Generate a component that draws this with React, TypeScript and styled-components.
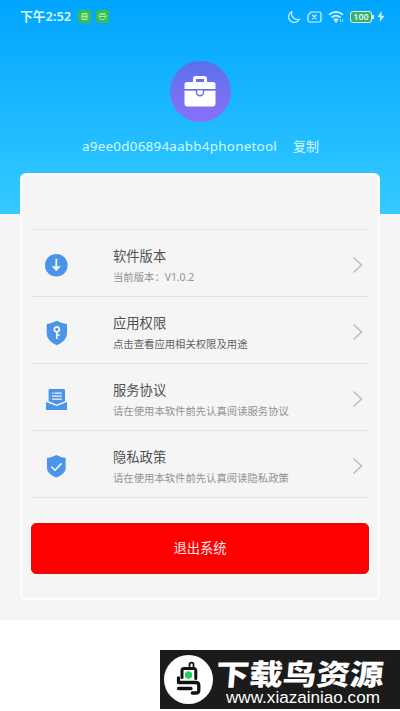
import React from "react";
import styled, { createGlobalStyle } from "styled-components";

const GlobalStyle = createGlobalStyle`
  * { box-sizing: border-box; }
  body {
    margin: 0;
    background: #fff;
    font-family: "Noto Sans", "Noto Sans CJK SC", sans-serif;
  }
`;

const Page = styled.div`
  width: 400px;
  height: 711px;
  display: flex;
  flex-direction: column;
  align-items: flex-end;
  overflow: hidden;
`;

const Screen = styled.main`
  width: 400px;
  height: 620px;
  flex: none;
  display: flex;
  flex-direction: column;
  background: linear-gradient(#00a5ff, #35caff) 0 0 / 100% 214px no-repeat #f5f5f5;
`;

const StatusBar = styled.header`
  height: 33px;
  padding: 0 15px 0 20px;
  display: flex;
  align-items: center;
  color: #d9f8ff;
`;

const Clock = styled.span`
  width: 58px;
  font-size: 12.8px;
  line-height: 33px;
  font-weight: 600;
  white-space: nowrap;
`;

const StatusIcons = styled.div`
  margin-left: auto;
  display: flex;
  align-items: center;
  gap: 6px;
`;

const AppBadges = styled.div`
  display: flex;
  gap: 5px;
`;

const Profile = styled.section`
  height: 140px;
  padding-top: 28px;
  display: flex;
  flex-direction: column;
  align-items: center;
`;

const Avatar = styled.div`
  width: 61px;
  height: 61px;
  border-radius: 50%;
  display: flex;
  align-items: center;
  justify-content: center;
  background: linear-gradient(#5b70ec, #8a70f8);
`;

const Identity = styled.div`
  width: 400px;
  margin-top: 14px;
  padding-left: 82px;
  display: flex;
  line-height: 20px;
  color: #d6f9ff;
  white-space: nowrap;
`;

const DeviceId = styled.span`
  width: 211px;
  font-size: 13.4px;
  letter-spacing: 0.26px;
`;

const CopyButton = styled.span`
  font-size: 13px;
`;

const Card = styled.section`
  height: 427px;
  margin: 0 20px;
  padding: 54px 9px 0;
  border: 2px solid #fdfdfd;
  border-radius: 6px;
  background: #f5f5f5;
`;

const Menu = styled.div`
  border-top: 1px solid #e6e6e6;
`;

const Row = styled.div`
  height: 67px;
  padding: 0 5px 0 13px;
  display: flex;
  align-items: center;
  border-bottom: 1px solid #e2e2e2;
`;

const IconSlot = styled.div`
  width: 69px;
  height: 26px;
  margin-top: 6px;
`;

const RowText = styled.div`
  flex: 1;
  padding-top: 5px;
`;

const RowTitle = styled.div`
  font-size: 13.3px;
  line-height: 22px;
  color: #505050;
`;

const RowNote = styled.div<{ $dark?: boolean }>`
  font-size: 10.35px;
  line-height: 20px;
  color: ${(p) => (p.$dark ? "#626262" : "#929292")};
  white-space: nowrap;
`;

const ArrowSlot = styled.div`
  height: 18px;
  margin-top: 4px;
`;

const ExitButton = styled.button`
  display: block;
  width: 338px;
  height: 51px;
  margin-top: 25px;
  padding: 0;
  border: 1px solid #dc1111;
  border-radius: 5px;
  background: #ff0000;
  color: #ffe9e9;
  font: 13.3px/49px "Noto Sans", "Noto Sans CJK SC", sans-serif;
`;

const SiteBanner = styled.footer`
  width: 240px;
  height: 59px;
  flex: none;
  margin-top: 30px;
  padding-left: 4px;
  display: flex;
  align-items: center;
  background: #1b1b1b;
  color: #fff;
`;

const BannerText = styled.div`
  margin-left: 3px;
  padding-top: 5px;
  white-space: nowrap;
`;

const BannerName = styled.div`
  height: 32px;
  font: 900 33.6px/34px "Noto Sans CJK SC", sans-serif;
  transform: scaleY(0.86) skewX(-4deg);
`;

const BannerUrl = styled.div`
  padding-left: 10px;
  font: 17.1px/20px "Liberation Sans", sans-serif;
`;

const BLUE = "#4a94ea";

const RobotBadge = ({ round }: { round?: boolean }) => (
  <svg width="13" height="13" viewBox="0 0 13 13">
    <rect width="13" height="13" rx="3" fill="#36bd53" />
    <g fill="none" stroke="#c5f5b9" strokeWidth=".9">
      {round ? (
        <path d="M4 2.800l1 1.200h3l1-1.200M3.200 5.600C3.200 3.500 9.800 3.500 9.800 5.600v1.700c0 3-6.600 3-6.600 0zM3.500 6.500h6" />
      ) : (
        <path d="M4 3.500h5v6H4zM3.500 6.400h6M5.500 5h2M5.500 8h2" />
      )}
    </g>
  </svg>
);

const Moon = () => (
  <svg width="14" height="14" viewBox="0 0 14 14">
    <path d="M4.700 1.700A5.700 5.700 0 1 0 12.400 9.300C8 10.700 3.500 6.500 4.700 1.700Z" fill="none" stroke="currentColor" strokeWidth="1.100" />
  </svg>
);

const SimMissing = () => (
  <svg width="15" height="12" viewBox="0 0 15 12">
    <path d="M4 1h8.500Q14 1 14 2.500v7Q14 11 12.500 11h-10Q1 11 1 9.500V4.200ZM5.400 4l4 4m0-4-4 4" fill="none" stroke="currentColor" strokeWidth="1.200" />
  </svg>
);

const Wifi = () => (
  <svg width="17" height="14" viewBox="0 0 17 14">
    <g fill="none" stroke="currentColor" strokeWidth="1.600">
      <path d="M1 4.700Q8 -1 15 4.700M3.400 7.500Q8 3.700 12.600 7.500M5.800 10Q8 8.300 10.200 10" />
      <path d="M12.500 9v3M14.700 9v3" strokeWidth=".7" />
    </g>
    <circle cx="8" cy="11.300" r="1.200" fill="currentColor" />
  </svg>
);

const BatteryWrap = styled.div`
  display: flex;
  align-items: center;
  margin-left: -1px;
`;

const BatteryBody = styled.span`
  width: 22px;
  height: 12px;
  border: 1px solid #d9f8ff;
  border-radius: 3px;
  background: #3eae63;
  font: 600 9px/10px "Noto Sans", sans-serif;
  text-align: center;
`;

const BatteryTip = styled.span`
  width: 2px;
  height: 4px;
  margin-right: 3px;
  background: #d9f8ff;
`;

const Bolt = () => (
  <svg width="8" height="11" viewBox="0 0 8 11">
    <path d="M4.700 0 .5 6h2.900l-.7 5L7.500 4.700H4.400Z" fill="currentColor" />
  </svg>
);

const Briefcase = () => (
  <svg width="32" height="31" viewBox="0 0 32 31">
    <path d="M10.500 7V2.800Q10.500 1.500 11.800 1.500h8.400q1.300 0 1.300 1.300V7" fill="none" stroke="#fff" strokeWidth="3" />
    <path d="M3 6h26q2.500 0 2.500 2.500V13H.5V8.500Q.5 6 3 6ZM.5 14.500h31v13q0 3-3 3h-25q-3 0-3-3Z" fill="#fff" />
    <path d="M12.500 14v2.300a3.500 3.500 0 0 0 7 0V14" fill="#fff" stroke="#6572dc" strokeWidth="1.500" />
    <path d="M.5 13.700h31" stroke="#6572dc" strokeWidth="1.300" />
  </svg>
);

type IconKind = "download" | "key" | "agreement" | "privacy";

const RowIcon = ({ kind }: { kind: IconKind }) => (
  <svg width="26" height="26" viewBox="0 0 26 26" fill={BLUE}>
    {kind === "download" && (
      <>
        <circle cx="12.300" cy="12.200" r="11.300" />
        <path d="M11.400 5.700h1.800V13.200h3.400v.6l-4.300 4.400L8.100 13.800V13.200h3.300Z" fill="#f5f5f5" />
      </>
    )}
    {kind === "key" && (
      <>
        <path d="M12.800.8Q17.500 3.400 23 4v9.500q0 7.200-10.200 11.700Q2.700 20.700 2.700 13.500V4Q8.200 3.400 12.800.8Z" />
        <g fill="none" stroke="#f5f5f5" strokeWidth="1.700">
          <circle cx="12.800" cy="9.300" r="2.500" />
          <path d="M12.800 12v7M12.800 15h3" />
        </g>
      </>
    )}
    {kind === "agreement" && (
      <>
        <path d="M5.800 2h14q1.200 0 1.200 1.200V14.300L12.800 17.500 4.600 14.300V3.200Q4.600 2 5.800 2Z" />
        <path d="M2 15l10.800 4 10.200-4V23H2Z" />
        <path d="M8 6.200h1.400M10.500 6.200h7.300M8 9.200h9.800M8 12.200h9.800" fill="none" stroke="#f5f5f5" strokeWidth="1.200" />
      </>
    )}
    {kind === "privacy" && (
      <>
        <path d="M12.300 1Q17 3.600 21.600 4v10.200q0 5.600-9.300 9.300Q3 19.800 3 14.200V4Q7.600 3.600 12.300 1Z" />
        <path d="m7.200 12.500 3.800 3.700 6.500-6.800" fill="none" stroke="#f5f5f5" strokeWidth="1.600" />
      </>
    )}
  </svg>
);

const Chevron = () => (
  <svg width="12" height="18" viewBox="0 0 12 18">
    <path d="m1.500 1.500 8 7.500-8 7.500" fill="none" stroke="#bebebe" strokeWidth="1.600" />
  </svg>
);

const BirdLogo = () => (
  <svg width="49" height="49" viewBox="0 0 49 49">
    <circle cx="24.500" cy="24.500" r="24.500" fill="#fff" />
    <g fill="none" stroke="#111" strokeWidth="3" strokeLinejoin="round" strokeLinecap="round">
      <path d="M25.500 12.500V10q0-2.300 2.200-2.300T29.500 10v2" strokeWidth="1.800" />
      <path d="M18 22.500v-7q0-2 2-2h9.500q2.300 0 2.300 2.300V23.500" />
      <path d="M14.500 23v4.500h17.500q2.800 0 2.800 3v5q0 2.500-3 2.500h-3.500M14.500 33.500h12.500" strokeWidth="3.300" />
    </g>
    <circle cx="24.500" cy="20" r="3.700" fill="#22cf62" />
  </svg>
);

const items: { kind: IconKind; title: string; note: string; dark?: boolean }[] = [
  { kind: "download", title: "软件版本", note: "当前版本：V1.0.2" },
  { kind: "key", title: "应用权限", note: "点击查看应用相关权限及用途", dark: true },
  { kind: "agreement", title: "服务协议", note: "请在使用本软件前先认真阅读服务协议" },
  { kind: "privacy", title: "隐私政策", note: "请在使用本软件前先认真阅读隐私政策" },
];

export default function App() {
  return (
    <Page>
      <GlobalStyle />
      <Screen>
        <StatusBar>
          <Clock>下午2:52</Clock>
          <AppBadges>
            <RobotBadge />
            <RobotBadge round />
          </AppBadges>
          <StatusIcons>
            <Moon />
            <SimMissing />
            <Wifi />
            <BatteryWrap>
              <BatteryBody>100</BatteryBody>
              <BatteryTip />
              <Bolt />
            </BatteryWrap>
          </StatusIcons>
        </StatusBar>
        <Profile>
          <Avatar>
            <Briefcase />
          </Avatar>
          <Identity>
            <DeviceId>a9ee0d06894aabb4phonetool</DeviceId>
            <CopyButton>复制</CopyButton>
          </Identity>
        </Profile>
        <Card>
          <Menu>
            {items.map((item) => (
              <Row key={item.kind}>
                <IconSlot>
                  <RowIcon kind={item.kind} />
                </IconSlot>
                <RowText>
                  <RowTitle>{item.title}</RowTitle>
                  <RowNote $dark={item.dark}>{item.note}</RowNote>
                </RowText>
                <ArrowSlot>
                  <Chevron />
                </ArrowSlot>
              </Row>
            ))}
          </Menu>
          <ExitButton>退出系统</ExitButton>
        </Card>
      </Screen>
      <SiteBanner>
        <BirdLogo />
        <BannerText>
          <BannerName>下载鸟资源</BannerName>
          <BannerUrl>www.xiazainiao.com</BannerUrl>
        </BannerText>
      </SiteBanner>
    </Page>
  );
}
